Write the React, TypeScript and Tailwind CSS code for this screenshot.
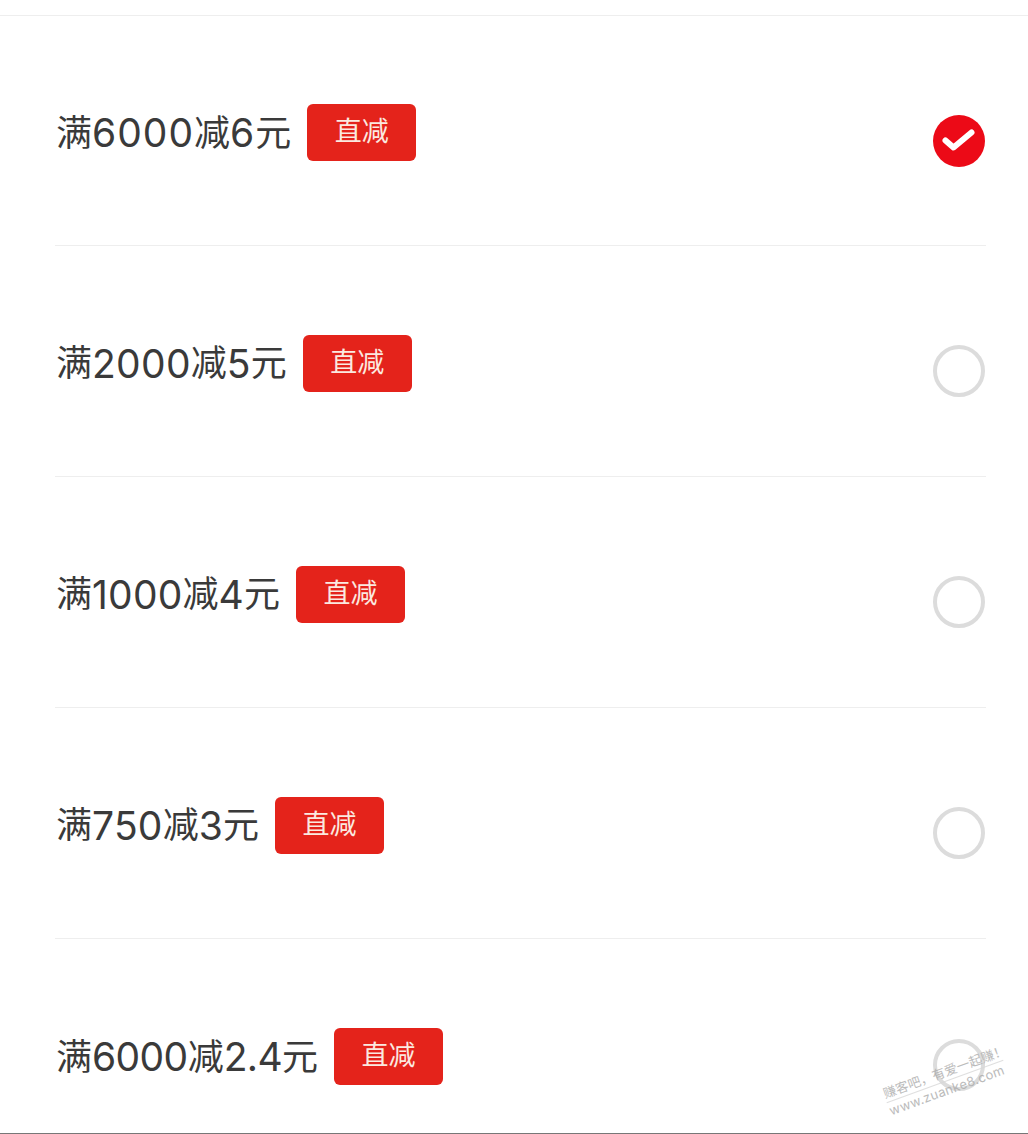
const offers = [
  { label: "满6000减6元", checked: true, digits: "text-[39px] tracking-[1px]" },
  { label: "满2000减5元", checked: false, digits: "text-[39px] tracking-[0.3px]" },
  { label: "满1000减4元", checked: false, digits: "text-[39px] tracking-[0.2px]" },
  { label: "满750减3元", checked: false, digits: "text-[39px] tracking-[0.2px]" },
  { label: "满6000减2.4元", checked: false, digits: "text-[39px] tracking-[-0.6px]" },
];

function Radio({ checked }: { checked: boolean }) {
  if (checked) {
    return (
      <svg width="52" height="52" viewBox="0 0 52 52" className="mr-[1px] mt-[20px] shrink-0">
        <circle cx="26" cy="26" r="26" fill="#ec0a17" />
        <path
          d="M12.5 25.5 L20.5 32.5 L38.5 17.5"
          fill="none"
          stroke="#ffffff"
          strokeWidth="6"
          strokeLinecap="round"
          strokeLinejoin="round"
        />
      </svg>
    );
  }
  return (
    <div className="mr-[1px] mt-[20px] h-[52px] w-[52px] shrink-0 rounded-full border-[4px] border-[#dcdcdc]" />
  );
}

export default function App() {
  return (
    <div
      className="relative h-[1134px] w-[1028px] overflow-hidden bg-white pt-[15px]"
      style={{ fontFamily: '"Inter", "Noto Sans CJK SC", sans-serif' }}
    >
      <div className="border-t border-[#eeeeee]">
        <div className="ml-[55px] mr-[42px]">
          {offers.map((offer, i) => (
            <div
              key={offer.label}
              className={`flex items-center justify-between ${
                i === 0 ? "h-[230px]" : "h-[231px]"
              } ${i < offers.length - 1 ? "border-b border-[#eeeeee]" : ""}`}
            >
              <div className="mt-[4px] flex items-center gap-[16px] pl-[1px]">
                <span className="flex items-center leading-none text-[#3a3a3a]">
                  {offer.label.split(/(\d[\d.]*)/).map((part, j) =>
                    j % 2 === 1 ? (
                      <span key={j} className={offer.digits}>
                        {part}
                      </span>
                    ) : (
                      <span key={j} className="text-[36px]">
                        {part}
                      </span>
                    ),
                  )}
                </span>
                <span className="flex h-[57px] w-[109px] items-center justify-center rounded-[6px] bg-[#e4231b] text-[27px] text-[#fbe9e0]">
                  直减
                </span>
              </div>
              <Radio checked={offer.checked} />
            </div>
          ))}
        </div>
      </div>

      {/* forum watermark */}
      <div className="absolute left-[883px] top-[1064px] w-[124px] -rotate-[20deg] text-[#ababab] opacity-80">
        <div className="whitespace-nowrap border-b border-[#d8d8d8] text-[13px] leading-[17px]">
          赚客吧，有爱一起赚！
        </div>
        <div className="whitespace-nowrap text-[13px] leading-[17px] tracking-[0.3px]">
          www.zuanke8.com
        </div>
      </div>

      <div className="absolute bottom-0 left-0 h-px w-full bg-[#777777]" />
    </div>
  );
}
